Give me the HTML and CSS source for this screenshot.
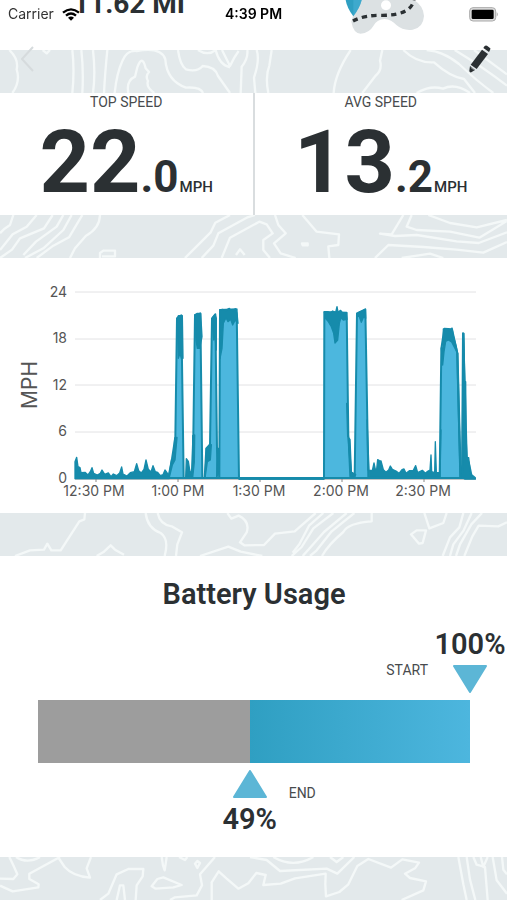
FILE: index.html
```
<!DOCTYPE html>
<html lang="en">
<head>
    <meta charset="UTF-8">
    <meta name="viewport" content="width=device-width, initial-scale=1.0">
    <title>Ride Summary</title>
    <link rel="stylesheet" href="styles.css">
</head>
<body>
    <div class="status-bar">
        <div class="carrier">
            <span>Carrier</span>
            <svg width="18" height="13" viewBox="0 0 54 39" fill="none" stroke="#000" stroke-width="7">
                <path d="M3 14Q27 -6 51 14M12 23Q27 10 42 23"/>
                <path d="M18 29Q27 22 36 29L27 38Z" fill="#000" stroke="none"/>
            </svg>
        </div>
        <time>4:39 PM</time>
        <svg class="battery-icon" width="30" height="15" viewBox="0 0 90 45">
            <rect x="2" y="2" width="78" height="40" rx="10" fill="#ddd" stroke="#aaa" stroke-width="3"/>
            <rect x="8" y="8" width="66" height="28" rx="4" fill="#000"/>
            <path d="M83 15q7 7 0 14z" fill="#aaa"/>
        </svg>
    </div>
    <nav class="nav">
        <button type="button" aria-label="Back">
            <svg width="14" height="26" viewBox="0 0 14 26" fill="none" stroke="#d6dbdd" stroke-width="2"><path d="M12 1L1 13L12 25"/></svg>
        </button>
        <button type="button" aria-label="Edit">
            <svg width="22" height="28" viewBox="0 0 66 84" fill="#2b3033">
                <path d="M47 3Q50 0 54 2L63 9Q66 11 63 15L60 21L43 9Z"/>
                <path d="M39 14L57 27L23 72L5 59Z"/>
                <path d="M3 63L18 75L7 82Q1 83 1 77Z"/>
                <path d="M5 67L14 74" stroke="#cdd3d5" stroke-width="2"/>
            </svg>
        </button>
    </nav>

    <main>
        <header class="distance">
            <p>11.62 MI</p>
            <svg width="84" height="35" viewBox="0 0 252 105">
                <path d="M22 65Q28 100 50 101Q76 99 88 78Q98 58 122 57Q142 58 158 76Q178 93 206 89Q238 83 240 48Q238 17 210 0H40Z" fill="#dce1e3"/>
                <circle cx="126" cy="16" r="15" fill="#fff"/>
                <path d="M5 0H53Q48 22 28 49Q9 24 5 0Z" fill="#2f9fc2"/>
                <path d="M28 0H53Q48 22 28 49Z" fill="#4db4d8" opacity=".5"/>
                <path d="M27 63Q60 45 112 46Q200 47 210 0" fill="none" stroke="#2b3033" stroke-width="10" stroke-dasharray="16 13"/>
            </svg>
        </header>

        <svg class="topo" viewBox="0 0 1521 129" preserveAspectRatio="xMidYMid slice">
            <path d="M28 0Q57 28 50 58Q62 95 37 129M128 0L140 10L150 0M217 0Q224 60 217 129M244 0Q251 60 247 129M279 0Q287 70 279 129M322 0Q315 70 312 129M344 129Q350 70 367 33Q380 0 410 3Q485 -10 496 28Q500 92 558 113Q602 110 609 129M385 129Q378 92 405 80L412 52Q427 11 437 55L447 66Q435 78 444 93Q437 111 463 129M534 0Q540 45 558 58Q592 67 608 48Q646 50 654 78L690 129M594 0Q623 19 647 0Q658 45 690 52M666 0L690 48Q703 20 716 3M742 0Q745 25 725 50L722 129M770 0Q780 30 762 83L766 129M815 0L808 47Q795 80 805 129M1052 0Q1004 72 1001 129M1147 0L1140 32Q1148 60 1126 78L1087 129M1210 0Q1250 40 1302 37Q1350 80 1392 87L1425 129M1280 0Q1331 4 1377 42Q1428 91 1480 129M1364 0Q1444 48 1521 107M1250 129Q1290 105 1329 116Q1366 98 1410 129M1422 0L1521 73"/>
        </svg>

        <section class="speeds">
            <div class="speed">
                <h2>TOP SPEED</h2>
                <p><b>22</b><strong>.0</strong><small>MPH</small></p>
            </div>
            <div class="speed">
                <h2>AVG SPEED</h2>
                <p><b>13</b><strong>.2</strong><small>MPH</small></p>
            </div>
        </section>

        <svg class="topo" viewBox="0 0 1521 129" preserveAspectRatio="xMidYMid slice">
            <path d="M40 0L30 30Q10 42 0 55M110 0L80 35L38 58L0 105M158 0L132 40L60 70L36 104L0 129M190 0L170 35L108 80L70 120M215 0L190 45L130 100L75 129M247 0L207 67L160 92L110 129M300 0Q299 40 258 62L225 100L210 129M300 129V114L310 107H345V124H306M555 129L632 52L646 23L690 0M605 129L640 92L655 55L740 8L765 0M665 129L690 68L778 20L800 28L818 55L790 75V105L810 129M825 0L835 30L857 55L822 85L842 115L887 129M708 120L720 103L734 120M907 0L950 50L1017 58L1015 90L985 94L988 129M906 85H923V91H908ZM1125 129L1165 90L1270 96L1370 104L1450 113L1521 81M1210 0L1175 58L1140 56L1185 63L1250 60L1370 79L1436 84L1521 52M1235 0L1220 35L1250 45L1350 50L1438 68L1521 18M1285 0L1350 24L1430 37L1521 15M1205 129L1290 116L1330 129"/>
        </svg>

        <section class="chart">
            <svg viewBox="0 0 507 255" role="img" aria-label="Speed over time">
                <path class="grid" d="M75 34H476M75 81H476M75 127H476M75 174H476"/>
                <g class="y-labels">
                    <text x="67" y="39">24</text>
                    <text x="67" y="85">18</text>
                    <text x="67" y="132">12</text>
                    <text x="67" y="178">6</text>
                    <text x="67" y="225">0</text>
                </g>
                <g class="x-labels">
                    <text x="94" y="238">12:30 PM</text>
                    <text x="178" y="238">1:00 PM</text>
                    <text x="259" y="238">1:30 PM</text>
                    <text x="341" y="238">2:00 PM</text>
                    <text x="423" y="238">2:30 PM</text>
                </g>
                <text class="unit" transform="translate(37 127) rotate(-90)">MPH</text>
                <path class="axis" d="M75 221H476M96 221V224M178 221V224M260 221V224M342 221V224M424 221V224"/>
                <svg width="507" height="255" viewBox="0 0 1521 765">
                    <g transform="translate(0 36)">
                        <path class="area" d="M505 624L516 567L526 502L531 145L544 136L551 624H575L580 497L585 135L601 130L607 624H614L619 535L630 523L636 145L646 133L651 535L658 624L660 120L710 118L717 626H972L973 126L1040 128L1045 495L1053 608L1064 620L1071 130L1096 118L1105 624H1319L1324 236L1333 176L1356 178L1372 250L1381 624H1386L1389 190L1394 332L1400 560L1407 580L1416 624Z"/>
                        <path class="dark" d="M225 626V575L230 562L234 590L240 593L243 608L255 607L264 615L271 605L276 593L281 610L292 615L301 610L306 600L314 613L325 609L333 620L340 612L350 617L359 609L365 591L369 612L381 618L391 608L403 605L410 581L416 602L424 609L432 598L438 570L445 598L453 606L459 587L466 605L473 607L481 617L489 614L495 600L507 617L515 567L521 568L524 504L531 502L525 570L517 585L507 626Z"/>
                        <path class="dark" d="M531 147L535 137L547 137L549 265L544 265L540 250L535 265L533 190ZM585 135L592 130L602 131L606 200L599 235L592 235L588 210ZM638 143L645 133L649 145L649 240L645 200L641 210L637 160ZM659 120L668 118L677 122L684 117L688 115L692 120L700 122L706 116L711 130L714 160L706 150L698 165L692 148L684 155L678 143L670 160L666 235L660 265Z"/>
                        <path class="dark" d="M557 624L559 566L565 574L569 600L577 621M578 622V497L584 495L583 575ZM615 624L619 535L625 536L629 523L634 524L631 570L622 575ZM650 624L651 534L655 535L656 600Z"/>
                        <path class="dark" d="M973 126L983 125L990 130L998 123L1007 127L1011 110L1014 126L1022 121L1029 131L1038 129L1041 148L1030 150L1023 143L1018 160L1013 210L1005 219L1001 190L994 170L985 155L976 145ZM1072 138L1078 126L1086 123L1096 118L1097 145L1091 140L1084 157L1078 140ZM1324 234L1330 234L1330 177L1338 183L1345 178L1351 183L1356 174L1360 198L1368 227L1373 250L1365 235L1355 216L1345 210L1337 214L1332 245L1328 285ZM1387 622L1389 190L1392 190L1394 335L1397 335L1398 500L1401 562L1406 563L1411 612L1420 618L1426 623V627H1394Z"/>
                        <path class="dark" d="M1040 400L1043 500L1050 508L1054 606L1067 614L1062 622L1050 620ZM1101 450L1104 600L1117 602L1122 579L1126 598L1130 598L1133 569L1138 572L1143 573L1150 599L1158 607L1166 600L1171 588L1177 598L1188 603L1197 610L1206 599L1212 597L1218 610L1228 602L1240 601L1247 587L1253 608L1267 601L1276 610L1283 604L1290 600L1293 555L1295 605L1304 608L1306 515L1309 608L1319 607L1323 480L1320 625H1108Z"/>
                        <path class="line" d="M239 622H507M717 626H972M1372 250L1378 480L1382 622M1108 622H1320"/>
                    </g>
                </svg>
            </svg>
        </section>

        <svg class="topo" viewBox="0 0 1521 129" preserveAspectRatio="xMidYMid slice">
            <path d="M45 129L90 112L132 110L142 92L154 112H182L238 25L253 19L255 0M290 129L312 116L332 97L345 110L372 125M437 0Q442 45 482 60Q508 78 494 129M473 0Q480 35 515 40L546 58L532 94L528 129M600 129L685 101L722 116L787 129M682 0L694 17L716 8Q751 25 740 58L720 88L733 97L792 96L825 62L884 55L947 0M1000 0L940 46L905 102L875 129M1040 0L972 57L927 108L908 129M1063 0L995 55L950 112L930 129M970 0L927 38L898 94L878 119M1115 0V25Q1043 30 1030 57Q985 95 966 129M1273 0L1288 46L1330 30L1340 0M1233 64L1250 52H1278L1268 90L1257 92ZM1390 0L1378 43L1350 73L1328 129M1415 0L1391 52L1360 94L1350 129M1446 0L1414 34L1380 94L1368 129M1521 28L1495 40L1436 38L1417 70L1393 129"/>
        </svg>

        <section class="battery">
            <h2>Battery Usage</h2>
            <div class="start">
                <span class="tag">START</span>
                <div class="marker">
                    <strong>100%</strong>
                    <svg width="36" height="28" viewBox="0 0 36 28"><path d="M2 1H34L18 27Z"/></svg>
                </div>
            </div>
            <div class="level"><div class="used" style="width: 49%"></div></div>
            <div class="end">
                <div class="marker" style="margin-left: calc(49% - 36px)">
                    <svg width="36" height="28" viewBox="0 0 36 28"><path d="M18 1L34 27H2Z"/></svg>
                    <strong>49%</strong>
                </div>
                <span class="tag">END</span>
            </div>
        </section>

        <svg class="topo" viewBox="0 0 1521 129" preserveAspectRatio="xMidYMid slice">
            <path d="M28 0L40 25L52 52L40 66L0 65M0 86L38 103L115 91L116 82L88 66V50L180 0M48 0Q82 22 120 0M174 0L194 30Q219 58 270 62L260 34L273 0M300 129L325 110L350 52L385 36H430L428 58L410 85L407 129M350 129L360 85H370L375 129M455 88L472 66L490 61L545 84L520 91L467 95ZM485 0L489 25L494 40L500 0M537 0L555 9L562 0M585 20L592 12L600 18L592 33ZM645 0L600 52L606 85L590 115L525 121L510 129M635 129V76L656 43L680 65L715 95L745 79L769 48L797 54L790 84L842 80L885 64L977 50L976 82L978 118L1018 105L1045 82L1072 27L1105 6L1173 32L1207 7L1257 17L1245 34L1215 50L1230 63L1278 73L1270 100L1205 129M750 0L800 9L840 42L980 35L1012 50L1063 0M820 0Q880 35 940 0M990 0L1010 15L1030 0M1375 0L1390 82L1400 129M1400 0L1410 68L1426 129M1420 0L1430 23L1455 30L1463 129M1442 0L1450 30L1463 0M1478 0L1490 70L1521 110M1506 0L1510 38L1521 52"/>
        </svg>
    </main>
</body>
</html>
```
FILE: styles.css
```
*{
    box-sizing: border-box;
}
body{
    margin: 0;
    background: #e3e9eb;
    color: #2b3033;
    font-family: Roboto, "Liberation Sans", sans-serif;
    overflow-x: hidden;
}
h2, p{
    margin: 0;
}
main{
    overflow: hidden;
}

/* bars that stay over the scrolled page */
.status-bar{
    position: fixed;
    top: 0;
    left: 0;
    right: 0;
    z-index: 2;
    display: grid;
    grid-template-columns: 1fr auto 1fr;
    align-items: center;
    height: 28px;
    padding: 0 8px;
    color: #000;
    font: 14px/20px Inter, sans-serif;
}
.status-bar time{
    font-weight: 600;
}
.carrier{
    display: flex;
    align-items: center;
    gap: 8px;
    color: #333;
}
.battery-icon{
    justify-self: end;
}
.nav{
    position: fixed;
    top: 45px;
    left: 0;
    right: 0;
    z-index: 2;
    display: flex;
    justify-content: space-between;
    align-items: center;
    padding: 0 16px 0 21px;
}
.nav button{
    display: flex;
    padding: 0;
    border: 0;
    background: none;
}

.distance{
    display: flex;
    justify-content: space-between;
    align-items: flex-start;
    height: 50px;
    padding: 0 79px 0 73px;
    background: #fff;
}
.distance p{
    margin-top: -12px;
    font-size: 28px;
    font-weight: 700;
    line-height: 32px;
}

.topo{
    display: block;
    width: 100%;
    height: 43px;
    fill: none;
    stroke: #f4f8f8;
    stroke-width: 7;
    stroke-linejoin: round;
}

.speeds{
    display: flex;
    background: #fff;
}
.speed{
    flex: 1;
    padding-bottom: 6px;
    text-align: center;
}
.speed + .speed{
    border-left: 2px solid #d9dddf;
}
.speed h2, .tag{
    color: #484b4d;
    font-size: 14px;
    font-weight: 400;
    line-height: 18px;
}
.speed p{
    display: flex;
    justify-content: center;
    align-items: baseline;
    margin-top: 4px;
}
.speed b{
    font-size: 88px;
    line-height: 94px;
}
.speed strong{
    font-size: 44px;
}
.speed small{
    margin-left: 1px;
    font-size: 15px;
    font-weight: 500;
}

.chart{
    background: #fff;
}
.chart > svg{
    display: block;
    width: 100%;
}
.chart text{
    fill: #555;
    font: 14px Inter, sans-serif;
}
.y-labels text{
    text-anchor: end;
}
.x-labels text, .chart .unit{
    text-anchor: middle;
}
.chart .unit{
    font-size: 21px;
}
.grid{
    stroke: #e2e2e4;
    stroke-width: 1;
}
.axis{
    stroke: #888;
    stroke-width: 1;
}
.area{
    fill: #4cb7de;
    stroke: #168bab;
    stroke-width: 6;
    stroke-linejoin: round;
}
.dark{
    fill: #168bab;
    stroke: #168bab;
    stroke-width: 4;
    stroke-linejoin: round;
}
.line{
    fill: none;
    stroke: #168bab;
    stroke-width: 7;
}

.battery{
    padding: 20px 37px 20px 38px;
    background: #fff;
}
.battery h2{
    font-size: 29px;
    font-weight: 600;
    line-height: 36px;
    text-align: center;
}
.start, .end{
    display: flex;
}
.start{
    justify-content: flex-end;
    align-items: flex-end;
    gap: 6px;
    margin: 14px -36px 7px 0;
}
.start .tag{
    margin-bottom: 14px;
}
.end{
    align-items: flex-start;
    gap: 3px;
    margin-top: 7px;
}
.end .tag{
    margin-top: 14px;
}
.marker{
    display: flex;
    flex-direction: column;
    align-items: center;
    gap: 3px;
    width: 72px;
}
.marker strong{
    font-size: 29px;
    font-weight: 600;
    line-height: 36px;
}
.marker svg{
    fill: #5cb6d6;
    stroke: #5cb6d6;
    stroke-width: 2;
    stroke-linejoin: round;
}
.level{
    height: 63px;
    background: linear-gradient(to right, #2f9fc2 49%, #4db6de);
}
.used{
    height: 100%;
    background: #9d9d9d;
}
```
